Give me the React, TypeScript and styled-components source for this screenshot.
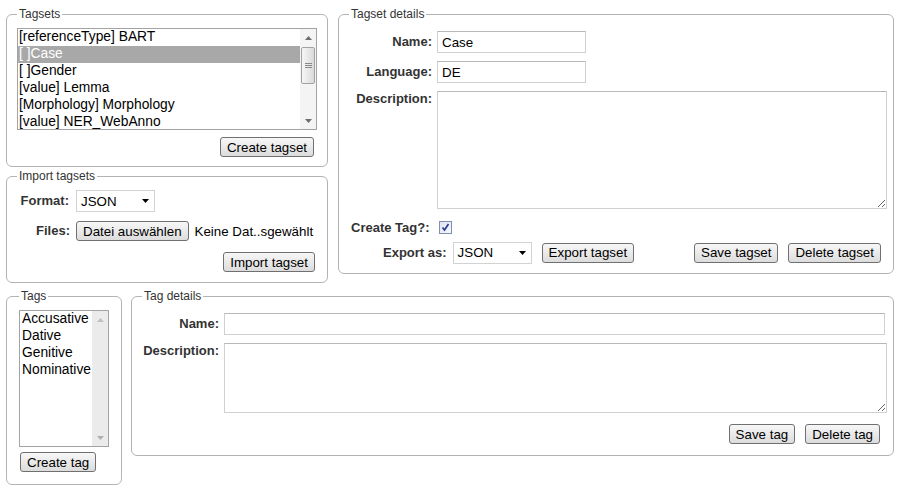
import { createGlobalStyle, styled } from "styled-components";

const GlobalStyle = createGlobalStyle`
  * {
    box-sizing: border-box;
  }
  body {
    margin: 0;
    background: #fff;
    font-family: "Liberation Sans", Arial, sans-serif;
    font-size: 13.33px;
    color: #000;
  }
`;

const Page = styled.div`
  padding: 7px 6px 0;
  display: flex;
  flex-direction: column;
  gap: 6px;
`;

const Row = styled.div<{ $gap: number }>`
  display: flex;
  align-items: flex-start;
  gap: ${(p) => p.$gap}px;
`;

const LeftColumn = styled.div`
  width: 322px;
  flex: none;
  display: flex;
  flex-direction: column;
  gap: 2px;
`;

const Panel = styled.fieldset<{ $pad?: string; $width?: number }>`
  margin: 0;
  min-width: 0;
  border: 1px solid #b3b3b3;
  border-radius: 6px;
  padding: ${(p) => p.$pad ?? "7px 10px 9px"};
  ${(p) => (p.$width ? `width: ${p.$width}px; flex: none;` : "flex: 1;")}
`;

const Legend = styled.legend`
  padding: 0 2px;
  font-size: 12px;
  line-height: 14px;
  color: #333;
`;

const ListBox = styled.div<{ $height: number }>`
  display: flex;
  height: ${(p) => p.$height}px;
  border: 1px solid #a3a3a3;
  background: #fff;
  overflow: hidden;
`;

const ListItems = styled.div`
  flex: 1;
  min-width: 0;
`;

const ListItem = styled.div<{ $selected?: boolean; $indent?: number }>`
  height: 17px;
  line-height: 16px;
  padding-left: ${(p) => p.$indent ?? 1}px;
  font-size: 13.8px;
  white-space: nowrap;
  background: ${(p) => (p.$selected ? "#a8a8a8" : "transparent")};
  color: ${(p) => (p.$selected ? "#fff" : "#000")};
`;

const ScrollBar = styled.div<{ $disabled?: boolean }>`
  width: 16px;
  flex: none;
  display: flex;
  flex-direction: column;
  background: ${(p) => (p.$disabled ? "#ebebeb" : "#f4f4f4")};
`;

const ScrollArrow = styled.div`
  height: 17px;
  display: flex;
  align-items: center;
  justify-content: center;
`;

const ScrollTrack = styled.div`
  flex: 1;
  padding: 1px 0;
`;

const ScrollThumb = styled.div`
  height: 37px;
  margin: 0 1px;
  border: 1px solid #a2a2a2;
  border-radius: 2px;
  background: linear-gradient(to right, #f6f6f6, #dadada);
  display: flex;
  align-items: center;
  justify-content: center;
`;

const ButtonRow = styled.div<{ $mt: number; $pr?: number; $justify?: string }>`
  display: flex;
  justify-content: ${(p) => p.$justify ?? "flex-end"};
  gap: 10px;
  margin-top: ${(p) => p.$mt}px;
  padding-right: ${(p) => p.$pr ?? 0}px;
  padding-left: ${(p) => (p.$justify ? 1 : 0)}px;
`;

const Button = styled.button<{ $push?: boolean }>`
  height: 20px;
  margin: 0;
  ${(p) => (p.$push ? "margin-left: auto;" : "")}
  padding: 0 6px;
  font: 13.33px "Liberation Sans", Arial, sans-serif;
  color: #000;
  white-space: nowrap;
  border: 1px solid #707070;
  border-radius: 3px;
  background: linear-gradient(#f7f7f7, #dcdcdc);
`;

const FormRow = styled.div<{ $mt?: number; $height: number; $indent?: number; $pr?: number; $gap: number }>`
  display: flex;
  align-items: center;
  gap: ${(p) => p.$gap}px;
  height: ${(p) => p.$height}px;
  margin-top: ${(p) => p.$mt ?? 0}px;
  padding-left: ${(p) => p.$indent ?? 0}px;
  padding-right: ${(p) => p.$pr ?? 0}px;
`;

const FieldGrid = styled.div<{ $label: number }>`
  display: grid;
  grid-template-columns: ${(p) => p.$label}px auto;
  column-gap: 5px;
  row-gap: 8px;
  padding-top: 3px;
  align-items: start;
`;

const Label = styled.label<{ $width?: number; $lh?: number }>`
  ${(p) => (p.$width ? `width: ${p.$width}px;` : "")}
  text-align: right;
  font-size: 13px;
  font-weight: bold;
  line-height: ${(p) => p.$lh ?? 22}px;
  color: #333;
  white-space: nowrap;
`;

const TextInput = styled.input<{ $width: number }>`
  width: ${(p) => p.$width}px;
  height: 22px;
  margin: 0;
  padding: 0 4px;
  border: 1px solid #d0d0d0;
  border-top-color: #b8b8b8;
  font: 13.33px "Liberation Sans", Arial, sans-serif;
  color: #000;
  background: #fff;
  outline: none;
`;

const TextArea = styled.textarea<{ $width: number; $height: number }>`
  display: block;
  width: ${(p) => p.$width}px;
  height: ${(p) => p.$height}px;
  margin: 0;
  padding: 2px 4px;
  border: 1px solid #d0d0d0;
  border-top-color: #b8b8b8;
  font: 13.33px "Liberation Sans", Arial, sans-serif;
  background: #fff;
  outline: none;
`;

const Select = styled.div<{ $mr?: number }>`
  width: 79px;
  height: 22px;
  flex: none;
  display: flex;
  align-items: center;
  justify-content: space-between;
  margin-right: ${(p) => p.$mr ?? 0}px;
  padding: 0 5px 0 4px;
  border: 1px solid #d2d2d2;
  background: #fff;
  font-size: 13.33px;
`;

const FileName = styled.span`
  font-size: 13.33px;
  white-space: nowrap;
`;

const CheckBox = styled.span`
  width: 13px;
  height: 13px;
  flex: none;
  display: flex;
  align-items: center;
  justify-content: center;
  border: 1px solid #7f8fb0;
  background: linear-gradient(135deg, #dfe3f3, #f7f8fd);
`;

const Caret = ({ up, color = "#000" }: { up?: boolean; color?: string }) => (
  <svg width="7" height="4" viewBox="0 0 7 4">
    <path d={up ? "M0 4 L3.5 0 L7 4 Z" : "M0 0 L7 0 L3.5 4 Z"} fill={color} />
  </svg>
);

const Grip = () => (
  <svg width="7" height="7" viewBox="0 0 7 7">
    <path d="M0 1.5 H7 M0 3.5 H7 M0 5.5 H7" stroke="#8a8a8a" strokeWidth="1" />
  </svg>
);

const Check = () => (
  <svg width="9" height="9" viewBox="0 0 9 9">
    <path d="M1.5 4.5 L3.5 7 L7.5 1" stroke="#2c3f8f" strokeWidth="1.7" fill="none" />
  </svg>
);

const tagsets = [
  "[referenceType] BART",
  "[ ]Case",
  "[ ]Gender",
  "[value] Lemma",
  "[Morphology] Morphology",
  "[value] NER_WebAnno",
];

const tags = ["Accusative", "Dative", "Genitive", "Nominative"];

export default function App() {
  return (
    <Page>
      <GlobalStyle />
      <Row $gap={10}>
        <LeftColumn>
          <Panel>
            <Legend>Tagsets</Legend>
            <ListBox $height={102}>
              <ListItems>
                {tagsets.map((t) => (
                  <ListItem key={t} $selected={t === "[ ]Case"}>
                    {t}
                  </ListItem>
                ))}
              </ListItems>
              <ScrollBar>
                <ScrollArrow>
                  <Caret up color="#6e6e6e" />
                </ScrollArrow>
                <ScrollTrack>
                  <ScrollThumb>
                    <Grip />
                  </ScrollThumb>
                </ScrollTrack>
                <ScrollArrow>
                  <Caret color="#6e6e6e" />
                </ScrollArrow>
              </ScrollBar>
            </ListBox>
            <ButtonRow $mt={7} $pr={3}>
              <Button>Create tagset</Button>
            </ButtonRow>
          </Panel>
          <Panel $pad="6px 10px 10px">
            <Legend>Import tagsets</Legend>
            <FormRow $height={24} $gap={7}>
              <Label $width={52}>Format:</Label>
              <Select>
                JSON
                <Caret />
              </Select>
            </FormRow>
            <FormRow $height={24} $mt={6} $gap={6}>
              <Label $width={53}>Files:</Label>
              <Button>Datei auswählen</Button>
              <FileName>Keine Dat..sgewählt</FileName>
            </FormRow>
            <ButtonRow $mt={9} $pr={2}>
              <Button>Import tagset</Button>
            </ButtonRow>
          </Panel>
        </LeftColumn>
        <Panel $pad="7px 8px 9px 10px">
          <Legend>Tagset details</Legend>
          <FieldGrid $label={83}>
            <Label>Name:</Label>
            <TextInput $width={149} defaultValue="Case" />
            <Label>Language:</Label>
            <TextInput $width={149} defaultValue="DE" />
            <Label $lh={15}>Description:</Label>
            <TextArea $width={450} $height={118} />
          </FieldGrid>
          <FormRow $height={15} $mt={11} $gap={9} $indent={2}>
            <Label $lh={15}>Create Tag?:</Label>
            <CheckBox>
              <Check />
            </CheckBox>
          </FormRow>
          <FormRow $height={23} $mt={6} $gap={6} $indent={34} $pr={4}>
            <Label>Export as:</Label>
            <Select $mr={4}>
              JSON
              <Caret />
            </Select>
            <Button>Export tagset</Button>
            <Button $push>Save tagset</Button>
            <Button style={{ marginLeft: 4 }}>Delete tagset</Button>
          </FormRow>
        </Panel>
      </Row>
      <Row $gap={9}>
        <Panel $width={116} $pad="7px 12px 12px 12px">
          <Legend>Tags</Legend>
          <ListBox $height={137}>
            <ListItems>
              {tags.map((t) => (
                <ListItem key={t} $indent={2}>
                  {t}
                </ListItem>
              ))}
            </ListItems>
            <ScrollBar $disabled>
              <ScrollArrow>
                <Caret up color="#c0c0c0" />
              </ScrollArrow>
              <ScrollTrack />
              <ScrollArrow>
                <Caret color="#b0b0b0" />
              </ScrollArrow>
            </ScrollBar>
          </ListBox>
          <ButtonRow $mt={5} $justify="flex-start">
            <Button>Create tag</Button>
          </ButtonRow>
        </Panel>
        <Panel $pad="7px 7px 11px 10px">
          <Legend>Tag details</Legend>
          <FieldGrid $label={77}>
            <Label>Name:</Label>
            <TextInput $width={661} />
            <Label $lh={15}>Description:</Label>
            <TextArea $width={663} $height={70} />
          </FieldGrid>
          <ButtonRow $mt={11} $pr={6}>
            <Button>Save tag</Button>
            <Button>Delete tag</Button>
          </ButtonRow>
        </Panel>
      </Row>
    </Page>
  );
}
